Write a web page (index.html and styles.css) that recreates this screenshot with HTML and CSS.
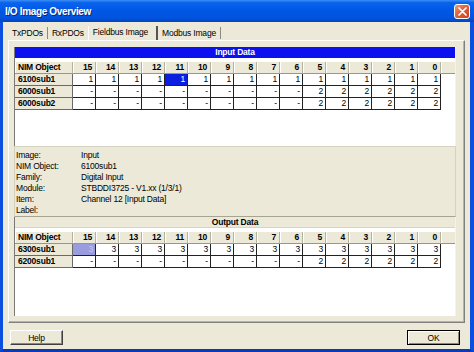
FILE: index.html
```html
<!DOCTYPE html>
<html>
<head>
<meta charset="utf-8">
<link rel="stylesheet" href="styles.css">
</head>
<body>
<div class="window">
  <div class="titlebar">
    <span class="title">I/O Image Overview</span>
    <span class="close"><svg width="9" height="9" viewBox="0 0 9 9"><path d="M1 1L8 8M8 1L1 8" stroke="#fff" stroke-width="1.7" stroke-linecap="round"/></svg></span>
  </div>
  <div class="frame">
    <div class="tabs">
      <div class="tab">TxPDOs</div>
      <div class="tab pre">RxPDOs</div>
      <div class="tab active">Fieldbus Image</div>
      <div class="tab">Modbus Image</div>
    </div>
    <div class="panel">
      <div class="list input">
        <div class="bar active">Input Data</div>
        <div class="grid">
          <div class="h name">NIM Object</div>
          <div class="h">15</div><div class="h">14</div><div class="h">13</div><div class="h">12</div><div class="h">11</div><div class="h">10</div><div class="h">9</div><div class="h">8</div><div class="h">7</div><div class="h">6</div><div class="h">5</div><div class="h">4</div><div class="h">3</div><div class="h">2</div><div class="h">1</div><div class="h">0</div><div class="h fill"></div>

          <div class="n">6100sub1</div>
          <div class="c">1</div><div class="c">1</div><div class="c">1</div><div class="c">1</div><div class="c sel">1</div><div class="c">1</div><div class="c">1</div><div class="c">1</div><div class="c">1</div><div class="c">1</div><div class="c">1</div><div class="c">1</div><div class="c">1</div><div class="c">1</div><div class="c">1</div><div class="c">1</div><div class="e"></div>

          <div class="n">6000sub1</div>
          <div class="c">-</div><div class="c">-</div><div class="c">-</div><div class="c">-</div><div class="c">-</div><div class="c">-</div><div class="c">-</div><div class="c">-</div><div class="c">-</div><div class="c">-</div><div class="c">2</div><div class="c">2</div><div class="c">2</div><div class="c">2</div><div class="c">2</div><div class="c">2</div><div class="e"></div>

          <div class="n">6000sub2</div>
          <div class="c">-</div><div class="c">-</div><div class="c">-</div><div class="c">-</div><div class="c">-</div><div class="c">-</div><div class="c">-</div><div class="c">-</div><div class="c">-</div><div class="c">-</div><div class="c">2</div><div class="c">2</div><div class="c">2</div><div class="c">2</div><div class="c">2</div><div class="c">2</div><div class="e"></div>
        </div>
      </div>
      <div class="info">
        <div class="line"><span class="lbl">Image:</span><span>Input</span></div>
        <div class="line"><span class="lbl">NIM Object:</span><span>6100sub1</span></div>
        <div class="line"><span class="lbl">Family:</span><span>Digital Input</span></div>
        <div class="line"><span class="lbl">Module:</span><span>STBDDI3725 - V1.xx (1/3/1)</span></div>
        <div class="line"><span class="lbl">Item:</span><span>Channel 12 [Input Data]</span></div>
        <div class="line"><span class="lbl">Label:</span><span></span></div>
      </div>
      <div class="list output">
        <div class="bar">Output Data</div>
        <div class="grid">
          <div class="h name">NIM Object</div>
          <div class="h">15</div><div class="h">14</div><div class="h">13</div><div class="h">12</div><div class="h">11</div><div class="h">10</div><div class="h">9</div><div class="h">8</div><div class="h">7</div><div class="h">6</div><div class="h">5</div><div class="h">4</div><div class="h">3</div><div class="h">2</div><div class="h">1</div><div class="h">0</div><div class="h fill"></div>

          <div class="n">6300sub1</div>
          <div class="c sel2">3</div><div class="c">3</div><div class="c">3</div><div class="c">3</div><div class="c">3</div><div class="c">3</div><div class="c">3</div><div class="c">3</div><div class="c">3</div><div class="c">3</div><div class="c">3</div><div class="c">3</div><div class="c">3</div><div class="c">3</div><div class="c">3</div><div class="c">3</div><div class="e"></div>

          <div class="n">6200sub1</div>
          <div class="c">-</div><div class="c">-</div><div class="c">-</div><div class="c">-</div><div class="c">-</div><div class="c">-</div><div class="c">-</div><div class="c">-</div><div class="c">-</div><div class="c">-</div><div class="c">2</div><div class="c">2</div><div class="c">2</div><div class="c">2</div><div class="c">2</div><div class="c">2</div><div class="e"></div>
        </div>
      </div>
    </div>
    <div class="buttons">
      <button class="btn">Help</button>
      <button class="btn default">OK</button>
    </div>
  </div>
</div>
</body>
</html>
```

FILE: styles.css
```css
* { box-sizing: border-box; }
body {
  margin: 0;
  width: 474px;
  height: 352px;
  overflow: hidden;
  font-family: "Liberation Sans", Arial, sans-serif;
  font-size: 8.5px;
  letter-spacing: -0.2px;
  color: #000;
  background: #0b47d6;
}
.window {
  width: 474px;
  height: 352px;
  display: flex;
  flex-direction: column;
}
.titlebar {
  height: 22px;
  flex: none;
  display: flex;
  align-items: center;
  justify-content: space-between;
  padding: 0 4px 0 5px;
  background: linear-gradient(#3c8ef5 0%, #0a63ec 12%, #0058e6 45%, #0054de 80%, #0046c0 100%);
}
.title {
  color: #fff;
  font-weight: bold;
  font-size: 10px;
  letter-spacing: -0.35px;
  text-shadow: 1px 1px 0 #0a2a80;
}
.close {
  width: 16px;
  height: 15px;
  border: 1px solid #fff;
  border-radius: 3px;
  background: linear-gradient(135deg, #f09a78 0%, #e2603a 45%, #c8401f 100%);
  display: flex;
  align-items: center;
  justify-content: center;
}
.frame {
  flex: 1;
  display: flex;
  flex-direction: column;
  background: #ece9d8;
  border-left: 3px solid #0b4ee0;
  border-right: 4px solid #0b4ee0;
  border-bottom: 3px solid #0a3ab8;
  padding: 3px 5px 4px 5px;
}
.tabs {
  height: 15px;
  flex: none;
  display: flex;
  align-items: flex-end;
}
.tab {
  height: 12px;
  line-height: 12px;
  margin-bottom: 1px;
  padding: 0 4px;
  border-right: 1px solid #8a8a8a;
  white-space: nowrap;
}
.tab.pre { border-right: none; padding-right: 4px; }
.tab.active {
  height: 14px;
  line-height: 13px;
  margin-bottom: 0;
  padding: 0 8px 0 4px;
  border-left: 1px solid #fff;
  border-right: 2px solid #555;
}
.tab:last-child { padding-left: 4px; }
.panel {
  flex: 1;
  display: flex;
  flex-direction: column;
  border-top: 1px solid #fff;
  border-left: 1px solid #fff;
  border-right: 1px solid #808080;
  border-bottom: 1px solid #808080;
  box-shadow: inset -1px -1px 0 #b8b4a4;
  padding: 6px 8px 6px 5px;
}
.list {
  background: #fff;
  border-left: 1px solid #7a7a7a;
  border-right: 1px solid #f4f3ee;
}
.list.input { height: 99px; flex: none; }
.list.output { flex: 1; }
.bar {
  height: 11px;
  line-height: 11px;
  margin-bottom: 4px;
  text-align: center;
  font-weight: bold;
  background: #ece9d8;
  border-bottom: 1px solid #d8d4c4;
}
.bar.active {
  background: #0b10ee;
  color: #fff;
  border-bottom: none;
}
.grid {
  display: grid;
  grid-template-columns: 58px repeat(16, 23px) 1fr;
  grid-auto-rows: 12px;
}
.grid > div {
  line-height: 11px;
  white-space: nowrap;
  overflow: hidden;
}
.h {
  background: #ece9d8;
  font-weight: bold;
  text-align: right;
  padding-right: 3px;
  border-right: 1px solid #b6b2a2;
  border-bottom: 1px solid #9a9788;
  box-shadow: inset 1px 0 0 #fff;
}
.h.name { text-align: left; padding-left: 3px; }
.h.fill { border-right: none; }
.n {
  background: #ece9d8;
  font-weight: bold;
  padding-left: 3px;
  border-right: 1px solid #6a6a6a;
  border-bottom: 1px solid #6a6a6a;
}
.c {
  background: #fff;
  text-align: right;
  padding-right: 2px;
  border-right: 1px solid #222;
  border-bottom: 1px solid #222;
}
.c.sel { background: #0c1fe0; color: #fff; }
.c.sel2 { background: #9a9ce0; color: #c8c8f4; }
.info {
  height: 71px;
  flex: none;
  border: 1px solid #d6d2c2;
  border-bottom-color: #a8a492;
  padding: 3px 0 0 1px;
  background: #ece9d8;
}
.line {
  display: flex;
  height: 11px;
  line-height: 11px;
}
.lbl { width: 65px; flex: none; }
.buttons {
  flex: none;
  display: flex;
  justify-content: space-between;
  margin-top: 7px;
  padding: 0 5px 0 2px;
}
.btn {
  width: 53px;
  height: 15px;
  padding: 0;
  font-family: "Liberation Sans", Arial, sans-serif;
  font-size: 8.5px;
  letter-spacing: -0.2px;
  color: #000;
  background: #ece9d8;
  border: 1px solid;
  border-color: #fff #404040 #404040 #fff;
  box-shadow: inset -1px -1px 0 #8a8878;
}
.btn.default {
  border: 1px solid #000;
  box-shadow: inset 1px 1px 0 #fff, inset -1px -1px 0 #8a8878;
}
```
